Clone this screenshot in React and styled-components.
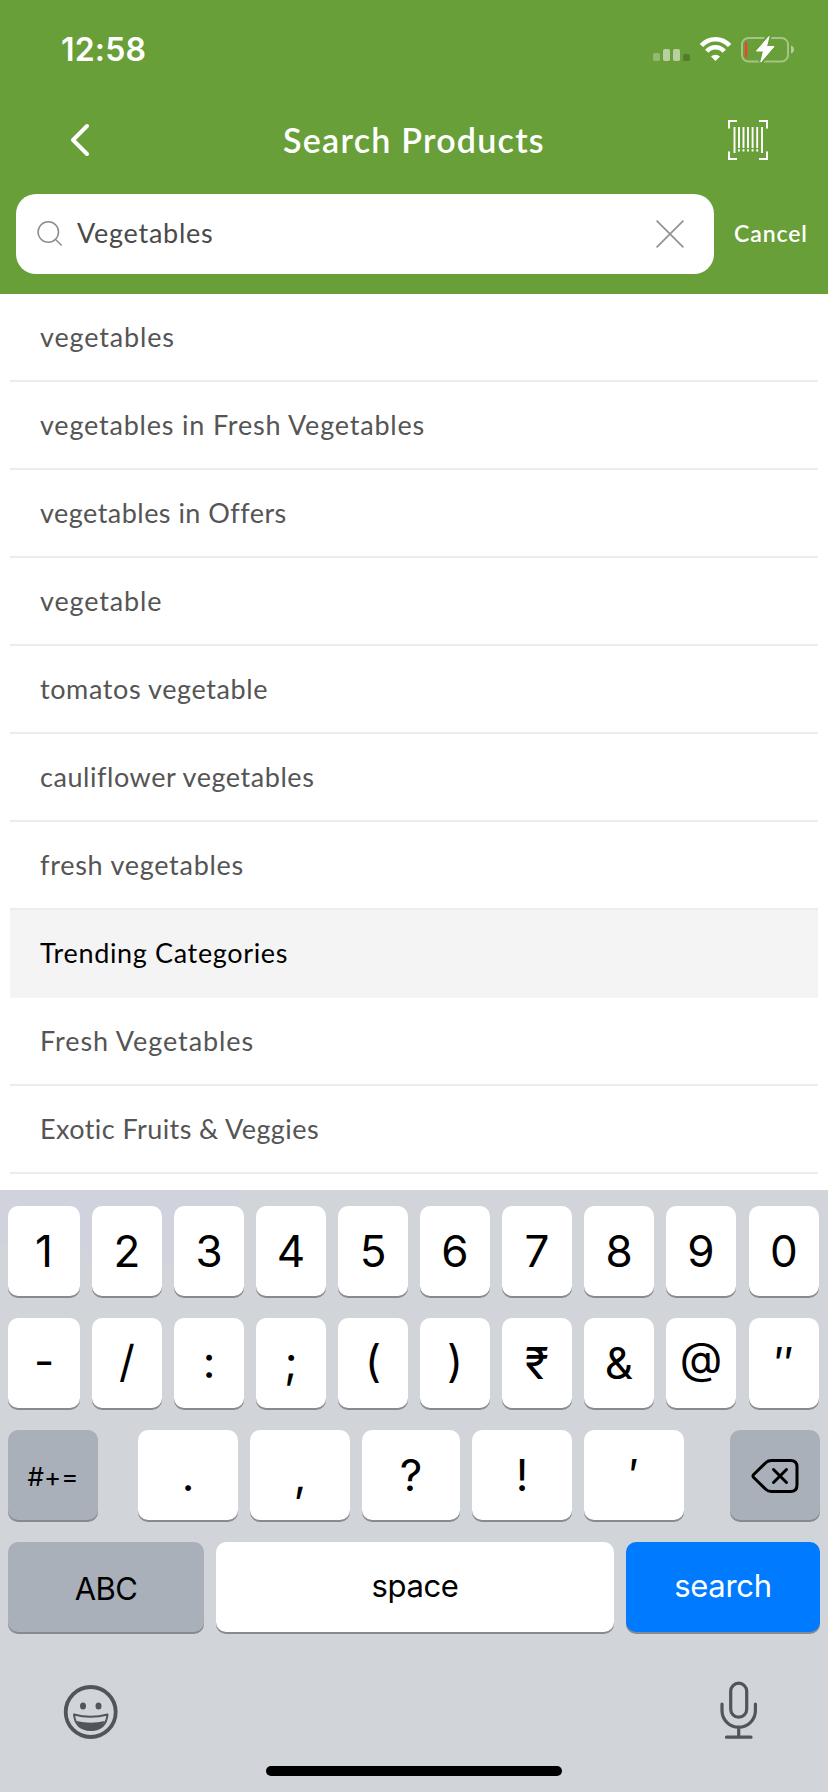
import React from 'react';
import styled, { createGlobalStyle } from 'styled-components';

const Global = createGlobalStyle`
  * { box-sizing: border-box; }
  body { margin: 0; background: #fff; }
`;

const Screen = styled.div`
  width: 828px;
  height: 1792px;
  display: flex;
  flex-direction: column;
  overflow: hidden;
  font-family: Lato, 'Open Sans', sans-serif;
  background: #fff;
`;

const Header = styled.header`
  height: 294px;
  flex: none;
  background: #689f38;
  color: #fff;
`;

const StatusBar = styled.div`
  height: 98px;
  padding: 0 34px 0 61px;
  display: flex;
  align-items: center;
  justify-content: space-between;
`;

const Time = styled.div`
  font: 600 32px/40px Inter, sans-serif;
  letter-spacing: 0.2px;
  padding-top: 2px;
`;

const NavBar = styled.div`
  height: 84px;
  display: grid;
  grid-template-columns: 160px 1fr 160px;
  align-items: center;
`;

const NavButton = styled.div`
  display: flex;
  justify-content: ${(p) => (p.$end ? 'flex-end' : 'flex-start')};
  padding: ${(p) => (p.$end ? '0 60px 0 0' : '0 0 0 70px')};
`;

const Title = styled.h1`
  margin: 0;
  text-align: center;
  font-size: 34px;
  line-height: 40px;
  font-weight: 600;
  white-space: nowrap;
  letter-spacing: ${(p) => p.$spacing}px;
`;

const SearchRow = styled.div`
  display: flex;
  align-items: center;
  padding: 12px 20px 20px 16px;
`;

const SearchField = styled.div`
  width: 698px;
  height: 80px;
  border-radius: 20px;
  background: #fff;
  display: flex;
  align-items: center;
  padding: 0 30px 0 21px;
`;

const Query = styled.span`
  flex: 1;
  margin-left: 14px;
  padding-bottom: 2px;
  color: #4a4a4a;
  font-size: 27px;
  line-height: 36px;
  letter-spacing: ${(p) => p.$spacing}px;
`;

const Cancel = styled.span`
  margin-left: 20px;
  padding-bottom: 2px;
  font-size: 23px;
  line-height: 30px;
  font-weight: 600;
  letter-spacing: ${(p) => p.$spacing}px;
`;

const List = styled.div`
  height: 896px;
  flex: none;
  padding: 0 10px;
  overflow: hidden;
`;

const Row = styled.div`
  height: 88px;
  display: flex;
  align-items: center;
  padding: 0 0 1px 30px;
  font-size: 27px;
  line-height: 36px;
  white-space: nowrap;
  letter-spacing: ${(p) => p.$spacing}px;
  color: ${(p) => (p.$heading ? '#000' : '#555')};
  background: ${(p) => (p.$heading ? '#f4f4f4' : '#fff')};
  border-bottom: 2px solid ${(p) => (p.$heading ? '#f4f4f4' : '#ebebf1')};
`;

const Keyboard = styled.div`
  height: 602px;
  flex: none;
  padding: 16px 8px 0;
  background:
    linear-gradient(#d0d3dd, #d0d3dd) 0 0 / 86px 55px no-repeat,
    linear-gradient(#d0d3dd, #d0d3dd) 86px 0 / 152px 72px no-repeat,
    #d1d4d9;
  font-family: Inter, 'Liberation Sans', sans-serif;
`;

const KeyRow = styled.div`
  display: flex;
  gap: 12px;
  margin-bottom: 22px;
`;

const tones = {
  light: ['#fff', '#000'],
  dark: ['#a9b0ba', '#000'],
  blue: ['#007aff', '#fff'],
};

const Key = styled.div`
  width: ${(p) => p.$w || 70}px;
  height: 90px;
  margin: 0 0 0 ${(p) => p.$before || 0}px;
  margin-right: ${(p) => p.$after || 0}px;
  padding-bottom: ${(p) => p.$lift || 0}px;
  padding-top: ${(p) => p.$drop || 0}px;
  border-radius: 10px;
  display: flex;
  align-items: center;
  justify-content: center;
  background: ${(p) => tones[p.$tone || 'light'][0]};
  color: ${(p) => tones[p.$tone || 'light'][1]};
  box-shadow: 0 2px 0 #898a8e;
  font-size: ${(p) => p.$size || 44}px;
  line-height: 50px;
  letter-spacing: ${(p) => p.$spacing || 0}px;
`;

const BottomBar = styled.div`
  display: flex;
  align-items: flex-start;
  justify-content: space-between;
  height: 112px;
  padding: 27px 62px 0 47px;
`;

const HomeIndicator = styled.div`
  width: 296px;
  height: 10px;
  margin: 0 auto;
  border-radius: 5px;
  background: #000;
`;

const StatusIcons = () => (
  <svg width="144" height="30" viewBox="650 34 144 30">
    <g fill="#fff">
      <rect x="653" y="53" width="7" height="8" rx="1.8" opacity=".28" />
      <rect x="663" y="49" width="7" height="12" rx="1.8" opacity=".52" />
      <rect x="673" y="49" width="7" height="12" rx="1.8" opacity=".52" />
    </g>
    <rect x="683" y="54" width="7" height="7" rx="1.8" fill="#537d2d" />
    <g fill="none" stroke="#fff" strokeWidth="4.6">
      <path d="M701.4 45.6a18.8 18.8 0 0 1 28.2 0" />
      <path d="M706.8 51.2a11.6 11.6 0 0 1 17.4 0" />
    </g>
    <path d="M715.5 61l-4.5-4.4a6.6 6.6 0 0 1 9 0z" fill="#fff" />
    <rect x="742" y="38" width="46" height="23.5" rx="6.5" fill="none" stroke="#fff" strokeOpacity=".4" strokeWidth="2" />
    <path d="M791 45.500q3 1 3 4t-3 4z" fill="#fff" opacity=".5" />
    <rect x="745" y="42" width="2.2" height="15.5" rx="1" fill="#ff3b30" />
    <path d="M769 36.500l-12.500 14.500h7l-2.700 11 13.200-15.500h-7.500z" fill="#fff" stroke="#689f38" strokeWidth="5" paintOrder="stroke" />
    <path d="M769 36.500l-12.500 14.500h7l-2.700 11 13.200-15.500h-7.500z" fill="#fff" stroke="#fff" strokeWidth="1" strokeLinejoin="round" />
  </svg>
);

const BackIcon = () => (
  <svg width="20" height="34" viewBox="70 123 20 34">
    <path d="M87 126L73 140l14 14" fill="none" stroke="#fff" strokeWidth="4" strokeLinecap="round" strokeLinejoin="round" />
  </svg>
);

const BarcodeIcon = () => (
  <svg width="40" height="40" viewBox="0 0 40 40" fill="none" stroke="#fff">
    <path d="M1 8.500V1h8M31 1h8v7.500M39 31.500V39h-8M9 39H1v-7.500" strokeWidth="2" />
    <path d="M6.500 7v26M34 7v26" strokeWidth="1.900" />
    <path d="M11 7v21M15.500 7v21M20 7v21M24.600 7v21M29.200 7v21" strokeWidth="1.900" />
    <path d="M11 29.300v2.200M15.500 29.300v2.200M20 29.300v2.200M24.600 29.300v2.200M29.200 29.300v2.200" strokeWidth="1.900" />
  </svg>
);

const SearchIcon = () => (
  <svg width="26" height="26" viewBox="0 0 26 26" fill="none" stroke="#8c8c8c" strokeWidth="1.500">
    <circle cx="11.300" cy="11" r="10.200" />
    <path d="M18.300 18.300L24.700 24.500" />
  </svg>
);

const ClearIcon = () => (
  <svg width="28" height="28" viewBox="0 0 28 28" fill="none" stroke="#929292" strokeWidth="1.700">
    <path d="M.6.6l26.800 26.800M27.400.6L.6 27.400" />
  </svg>
);

const BackspaceIcon = () => (
  <svg width="48" height="36" viewBox="0 0 48 36" fill="none" stroke="#000" strokeWidth="3" strokeLinecap="round" strokeLinejoin="round">
    <path d="M20.500 2.500H39.500Q46 2.500 46 9v18q0 6.500-6.500 6.500H20.500q-3.500 0-5.500-2L2.700 19.500q-1.400-1.500 0-3L15 4.500q2-2 5.500-2z" />
    <path d="M22.500 11.500l13 13M35.500 11.500l-13 13" />
  </svg>
);

const EmojiIcon = () => (
  <svg width="72" height="60" viewBox="0 -3 72 60">
    <circle cx="35.700" cy="28" r="25" fill="none" stroke="#50555b" strokeWidth="3.800" />
    <ellipse cx="28" cy="22" rx="3" ry="3.600" fill="#50555b" />
    <ellipse cx="43.500" cy="22" rx="3" ry="3.600" fill="#50555b" />
    <path d="M19 30.500q16.700 4.500 33.500 0-1.500 15.500-16.700 15.500T19 30.500z" fill="none" stroke="#50555b" strokeWidth="2" strokeLinejoin="round" />
    <path d="M21.500 37q14.300 3.500 28.500 0-4 9.500-14.200 9.500T21.500 37z" fill="#50555b" />
  </svg>
);

const MicIcon = () => (
  <svg width="38" height="58" viewBox="0 0 38 58" fill="none" stroke="#50555b" strokeWidth="3.200" strokeLinecap="round">
    <rect x="10.700" y="2.200" width="16" height="34" rx="8" />
    <path d="M2 23v6.500a16.700 16.700 0 0 0 33.400 0V23M18.700 46v10M6.500 56.200h24.500" />
  </svg>
);

const rows = [
  ['vegetables', 0.85],
  ['vegetables in Fresh Vegetables', 0.8],
  ['vegetables in Offers', 0.47],
  ['vegetable', 0.87],
  ['tomatos vegetable', 0.6],
  ['cauliflower vegetables', 0.55],
  ['fresh vegetables', 0.73],
  ['Trending Categories', 0.65, true],
  ['Fresh Vegetables', 0.92],
  ['Exotic Fruits & Veggies', 0.42],
];

const digits = ['1', '2', '3', '4', '5', '6', '7', '8', '9', '0'];
const symbols = [
  ['-', 4],
  ['/', 4],
  [':', 3],
  [';', 3],
  ['(', 5],
  [')', 5],
  ['₹', 0],
  ['&', 0],
  ['@', 10],
  ['″', 0],
];
const punctuation = ['.', ',', '?', '!', '′'];

export default function App() {
  return (
    <Screen>
      <Global />
      <Header>
        <StatusBar>
          <Time>12:58</Time>
          <StatusIcons />
        </StatusBar>
        <NavBar>
          <NavButton><BackIcon /></NavButton>
          <Title $spacing={1.25}>Search Products</Title>
          <NavButton $end><BarcodeIcon /></NavButton>
        </NavBar>
        <SearchRow>
          <SearchField>
            <SearchIcon />
            <Query $spacing={0.75}>Vegetables</Query>
            <ClearIcon />
          </SearchField>
          <Cancel $spacing={0.9}>Cancel</Cancel>
        </SearchRow>
      </Header>
      <List>
        {rows.map(([label, spacing, heading]) => (
          <Row key={label} $spacing={spacing} $heading={heading}>{label}</Row>
        ))}
      </List>
      <Keyboard>
        <KeyRow>
          {digits.map((d, i) => (
            <Key key={d} $w={i ? 70 : 72} $before={i === 9 ? 1 : 0}>{d}</Key>
          ))}
        </KeyRow>
        <KeyRow>
          {symbols.map(([s, lift], i) => (
            <Key key={s} $w={i ? 70 : 72} $lift={lift} $before={i === 9 ? 1 : 0}>{s}</Key>
          ))}
        </KeyRow>
        <KeyRow>
          <Key $w={90} $tone="dark" $size={26} $after={28} $drop={4}>#+=</Key>
          {punctuation.map((s, i) => (
            <Key key={s} $w={i === 2 ? 98 : 100}>{s}</Key>
          ))}
          <Key $w={90} $tone="dark" $before={34} $drop={2}><BackspaceIcon /></Key>
        </KeyRow>
        <KeyRow>
          <Key $w={196} $tone="dark" $size={31} $spacing={-0.6} $drop={4}>ABC</Key>
          <Key $w={398} $size={31} $spacing={-0.4} $lift={2}>space</Key>
          <Key $w={194} $tone="blue" $size={31} $spacing={-0.3} $lift={2}>search</Key>
        </KeyRow>
        <BottomBar>
          <EmojiIcon />
          <MicIcon />
        </BottomBar>
        <HomeIndicator />
      </Keyboard>
    </Screen>
  );
}
